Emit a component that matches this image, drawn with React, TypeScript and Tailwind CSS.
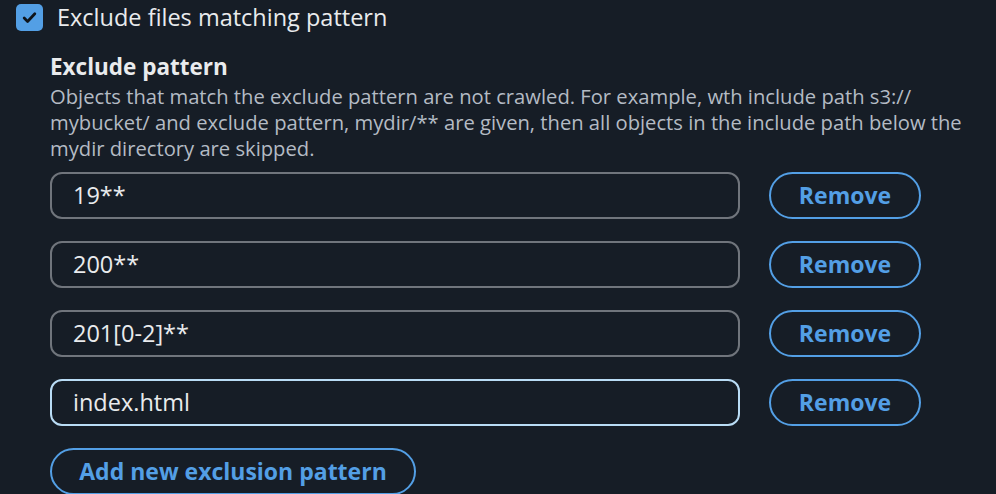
import React from "react";

const patterns = ["19**", "200**", "201[0-2]**", "index.html"];

function PatternRow({ value, focused }: { value: string; focused?: boolean }) {
  return (
    <div className="flex items-center gap-[29px]">
      <div
        className={
          "flex h-[47px] w-[690px] items-center rounded-[12px] border-2 px-[21px] text-[23.5px] text-[#e9ebed] " +
          (focused ? "border-[#b9dcf5]" : "border-[#70757c]")
        }
      >
        {value}
      </div>
      <button className="flex h-[47px] w-[152px] items-center justify-center rounded-full border-2 border-[#539fe5] text-[23px] font-bold text-[#539fe5]">
        Remove
      </button>
    </div>
  );
}

export default function App() {
  return (
    <div
      className="h-[494px] w-[996px] overflow-hidden bg-[#161d26] text-[#e9ebed]"
      style={{ fontFamily: '"Open Sans", "Noto Sans", sans-serif' }}
    >
      <div className="flex h-[28px] items-center gap-[14px] pl-[16px] mt-[3px]">
        <span className="flex h-[27px] w-[27px] items-center justify-center rounded-[5px] bg-[#539fe5]">
          <svg width="17" height="17" viewBox="0 0 16 16" fill="none">
            <path d="M3 8.5l3.2 3.2L13 4.5" stroke="#0f141a" strokeWidth="2.6" strokeLinecap="round" strokeLinejoin="round" />
          </svg>
        </span>
        <span className="text-[23.5px] leading-[28px]">Exclude files matching pattern</span>
      </div>

      <div className="pl-[50px] pt-[19px]">
        <div className="text-[22.5px] font-bold leading-[33px]">Exclude pattern</div>
        <p className="w-[940px] text-[20.2px] leading-[26px] text-[#b4bbc4]">
          Objects that match the exclude pattern are not crawled. For example, wth include path s3://
          <br />
          mybucket/ and exclude pattern, mydir/** are given, then all objects in the include path below the
          <br />
          mydir directory are skipped.
        </p>

        <div className="mt-[11px] flex flex-col gap-[22px]">
          {patterns.map((p, i) => (
            <PatternRow key={p} value={p} focused={i === patterns.length - 1} />
          ))}
        </div>

        <button className="mt-[22px] flex h-[47px] w-[366px] items-center justify-center rounded-full border-2 border-[#539fe5] text-[23px] font-bold text-[#539fe5]">
          Add new exclusion pattern
        </button>
      </div>
    </div>
  );
}
